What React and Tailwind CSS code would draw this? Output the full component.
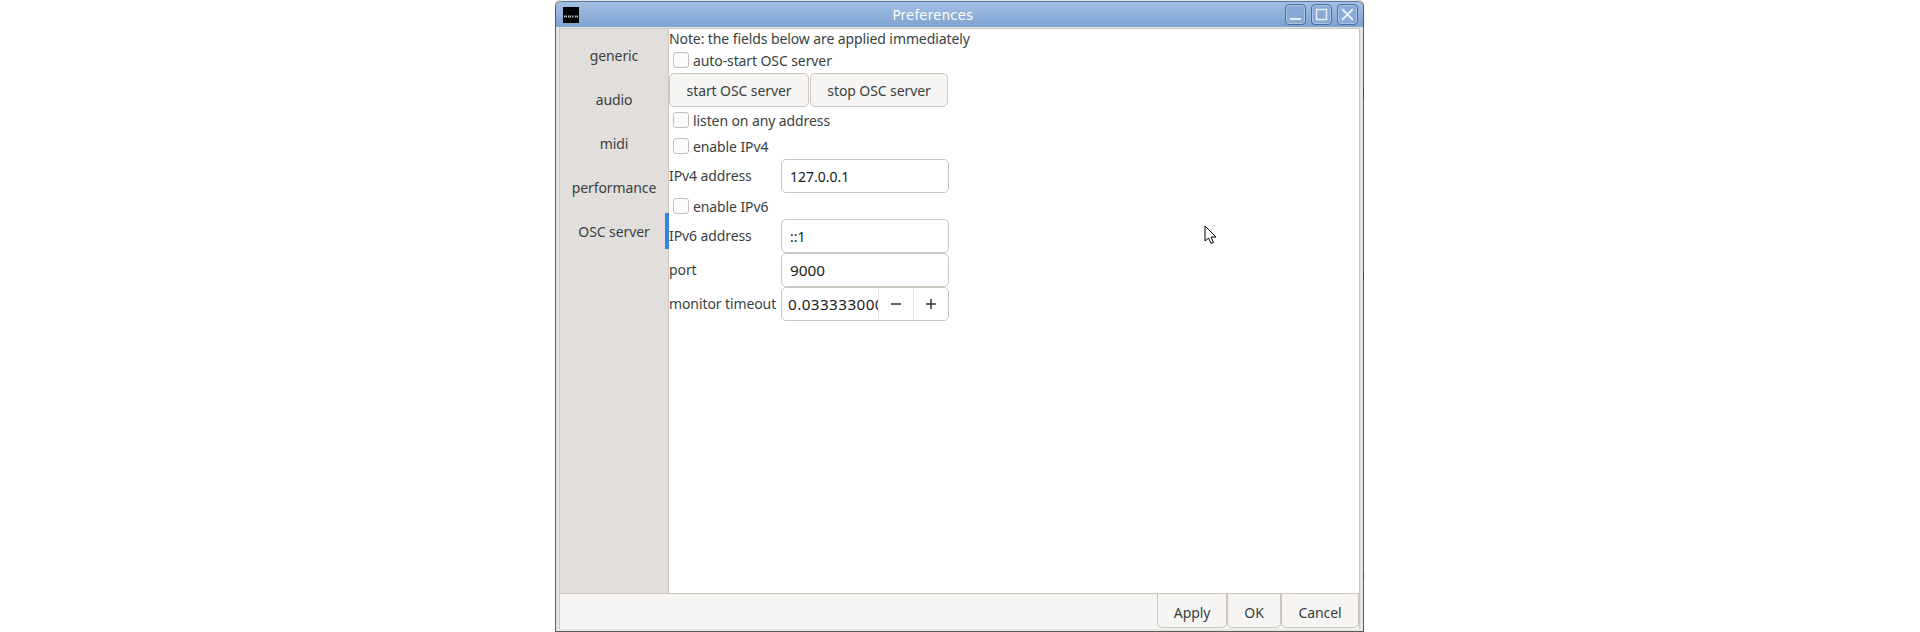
import React from "react";

const font = "font-['Noto_Sans',sans-serif]";

const tabs = ["generic", "audio", "midi", "performance", "OSC server"];

const Check = ({ label, className = "" }) => (
  <label className={`flex items-center h-[16px] pl-[4px] ${className}`}>
    <span className="w-[16px] h-[16px] rounded-[3px] border border-[#c4bfba] bg-[#fbfbfa] mr-[4px]"></span>
    <span className="pt-[2px] text-[14px] tracking-[-0.1px] text-[#3a3f41] leading-none">{label}</span>
  </label>
);

const Field = ({ label, value, className = "", valueClass = "text-[14px]" }) => (
  <div className={`flex items-center h-[34px] ${className}`}>
    <span className="w-[112px] text-[14px] tracking-[-0.1px] text-[#3a3f41] leading-none whitespace-nowrap">{label}</span>
    <div className={`w-[168px] h-[34px] flex items-center pl-[8px] bg-white border border-[#cdc7c2] rounded-[5px] text-[#1a1a1a] ${valueClass}`}>
      {value}
    </div>
  </div>
);

const Btn = ({ children, className = "" }) => (
  <button className={`flex items-center justify-center rounded-[5px] border border-[#cdc7c2] bg-[#f6f5f4] text-[14px] tracking-[-0.1px] text-[#3a3f41] ${className}`}>
    {children}
  </button>
);

const WinBtn = ({ children }) => (
  <div className="w-[21px] h-[21px] rounded-[4px] border border-[#4a6f9f] bg-[#86a9d6] shadow-[inset_0_0_0_1px_#a9c4e6] flex items-center justify-center">
    <svg width="15" height="15" viewBox="0 0 15 15" fill="none" stroke="#e8eff8">
      {children}
    </svg>
  </div>
);

export default function App() {
  return (
    <div className={`relative w-[1920px] h-[632px] overflow-hidden bg-white flex justify-center ${font}`}>
      <div className="w-[809px] h-[632px] ml-[-1px] flex flex-col border-x border-b border-[#5a5a5a] rounded-t-[6px] bg-[#e8e6e3]">
        {/* title bar */}
        <div className="h-[26px] mt-[1px] flex items-center rounded-t-[6px] border-t border-[#54789f] bg-gradient-to-b from-[#a3c0e4] to-[#7ea2d0] pl-[7px] pr-[5px]">
          <svg width="16" height="16" viewBox="0 0 16 16">
            <rect width="16" height="16" fill="#000" />
            <path d="M1 9.5h3M5 9.5h3M9 9.5h2M12 9.5h3" stroke="#c8c8c8" strokeWidth="2" strokeDasharray="1.5 .5" />
          </svg>
          <span className="flex-1 pt-[2px] pl-[2px] text-center text-[13.2px] text-white tracking-[0.3px] font-['DejaVu_Sans',sans-serif]">
            Preferences
          </span>
          <div className="flex gap-[5px]">
            <WinBtn>
              <path d="M2 12h11" strokeWidth="2" />
            </WinBtn>
            <WinBtn>
              <rect x="2.5" y="2.5" width="10" height="10" strokeWidth="1.5" />
            </WinBtn>
            <WinBtn>
              <path d="M2 2l11 11M13 2L2 13" strokeWidth="1.8" />
            </WinBtn>
          </div>
        </div>

        <div className="flex-1 min-h-0 flex flex-col mx-[3px] mt-[1px] mb-[2px] border border-[#cdc7c2] border-b-0 bg-white">
          <div className="flex-1 min-h-0 flex">
            {/* sidebar */}
            <div className="w-[109px] bg-[#e1dedb] border-r border-[#cdc7c2] pt-[4px] relative">
              {tabs.map((t) => (
                <div key={t} className="h-[44px] flex items-center justify-center text-[14px] tracking-[-0.1px] text-[#3a3f41]">
                  {t}
                </div>
              ))}
              <div className="absolute right-[-1px] top-[184px] w-[4px] h-[36px] bg-[#3584e4]"></div>
            </div>

            {/* OSC page */}
            <div className="flex-1 flex flex-col">
              <div className="h-[24px] pb-[5px] flex items-center text-[14px] tracking-[-0.1px] text-[#3a3f41]">
                Note: the fields below are applied immediately
              </div>
              <Check label="auto-start OSC server" className="mt-[-1px]" />
              <div className="flex gap-[1px] mt-[5px]">
                <Btn className="w-[140px] h-[34px]">start OSC server</Btn>
                <Btn className="w-[138px] h-[34px]">stop OSC server</Btn>
              </div>
              <Check label="listen on any address" className="mt-[5px]" />
              <Check label="enable IPv4" className="mt-[10px]" />
              <Field label="IPv4 address" value="127.0.0.1" className="mt-[5px]" />
              <Check label="enable IPv6" className="mt-[5px]" />
              <Field label="IPv6 address" value="::1" className="mt-[5px]" />
              <Field label="port" value="9000" valueClass="text-[15.3px]" />
              <div className="flex items-center h-[34px]">
                <span className="w-[112px] text-[14px] tracking-[-0.1px] text-[#3a3f41] leading-none whitespace-nowrap">monitor timeout</span>
                <div className="w-[168px] h-[34px] flex items-center bg-white border border-[#cdc7c2] rounded-[5px] text-[15.3px] tracking-[0.4px] text-[#1a1a1a] overflow-hidden">
                  <span className="w-[96px] pl-[6px] overflow-hidden whitespace-nowrap">0.033333000</span>
                  <span className="w-[35px] h-full flex items-center justify-center border-l border-[#e8e6e3] text-[#2e3436]">
                    <svg width="12" height="12" viewBox="0 0 12 12"><path d="M1 6h10" stroke="#2e3436" strokeWidth="1.5" /></svg>
                  </span>
                  <span className="flex-1 h-full flex items-center justify-center border-l border-[#e8e6e3]">
                    <svg width="12" height="12" viewBox="0 0 12 12"><path d="M1 6h10M6 1v10" stroke="#2e3436" strokeWidth="1.5" /></svg>
                  </span>
                </div>
              </div>
            </div>
          </div>

          {/* button bar */}
          <div className="h-[36px] flex justify-end border-t border-[#cdc7c2] bg-[#f6f5f4]">
            <Btn className="w-[70px] h-[34px] pt-[3px] rounded-t-none border-t-0">Apply</Btn>
            <Btn className="w-[54px] h-[34px] pt-[3px] rounded-t-none border-t-0">OK</Btn>
            <Btn className="w-[78px] h-[34px] pt-[3px] rounded-t-none border-t-0">Cancel</Btn>
          </div>
        </div>
      </div>

      {/* bits of the window behind */}
      <div className="absolute left-[1363px] top-[88px] w-[1px] h-[10px] bg-[#444444]"></div>
      <div className="absolute left-[1363px] top-[271px] w-[1px] h-[10px] bg-[#444444]"></div>
      <div className="absolute left-[1363px] top-[574px] w-[1px] h-[4px] bg-[#444444]"></div>

      {/* mouse pointer */}
      <svg className="absolute left-[1204px] top-[225px]" width="14" height="20" viewBox="0 0 14 20">
        <path d="M1 1v15l3.5-3 2.5 5.5 2.5-1-2.5-5.5H12z" fill="#fff" stroke="#000" strokeWidth="1" />
      </svg>
    </div>
  );
}
